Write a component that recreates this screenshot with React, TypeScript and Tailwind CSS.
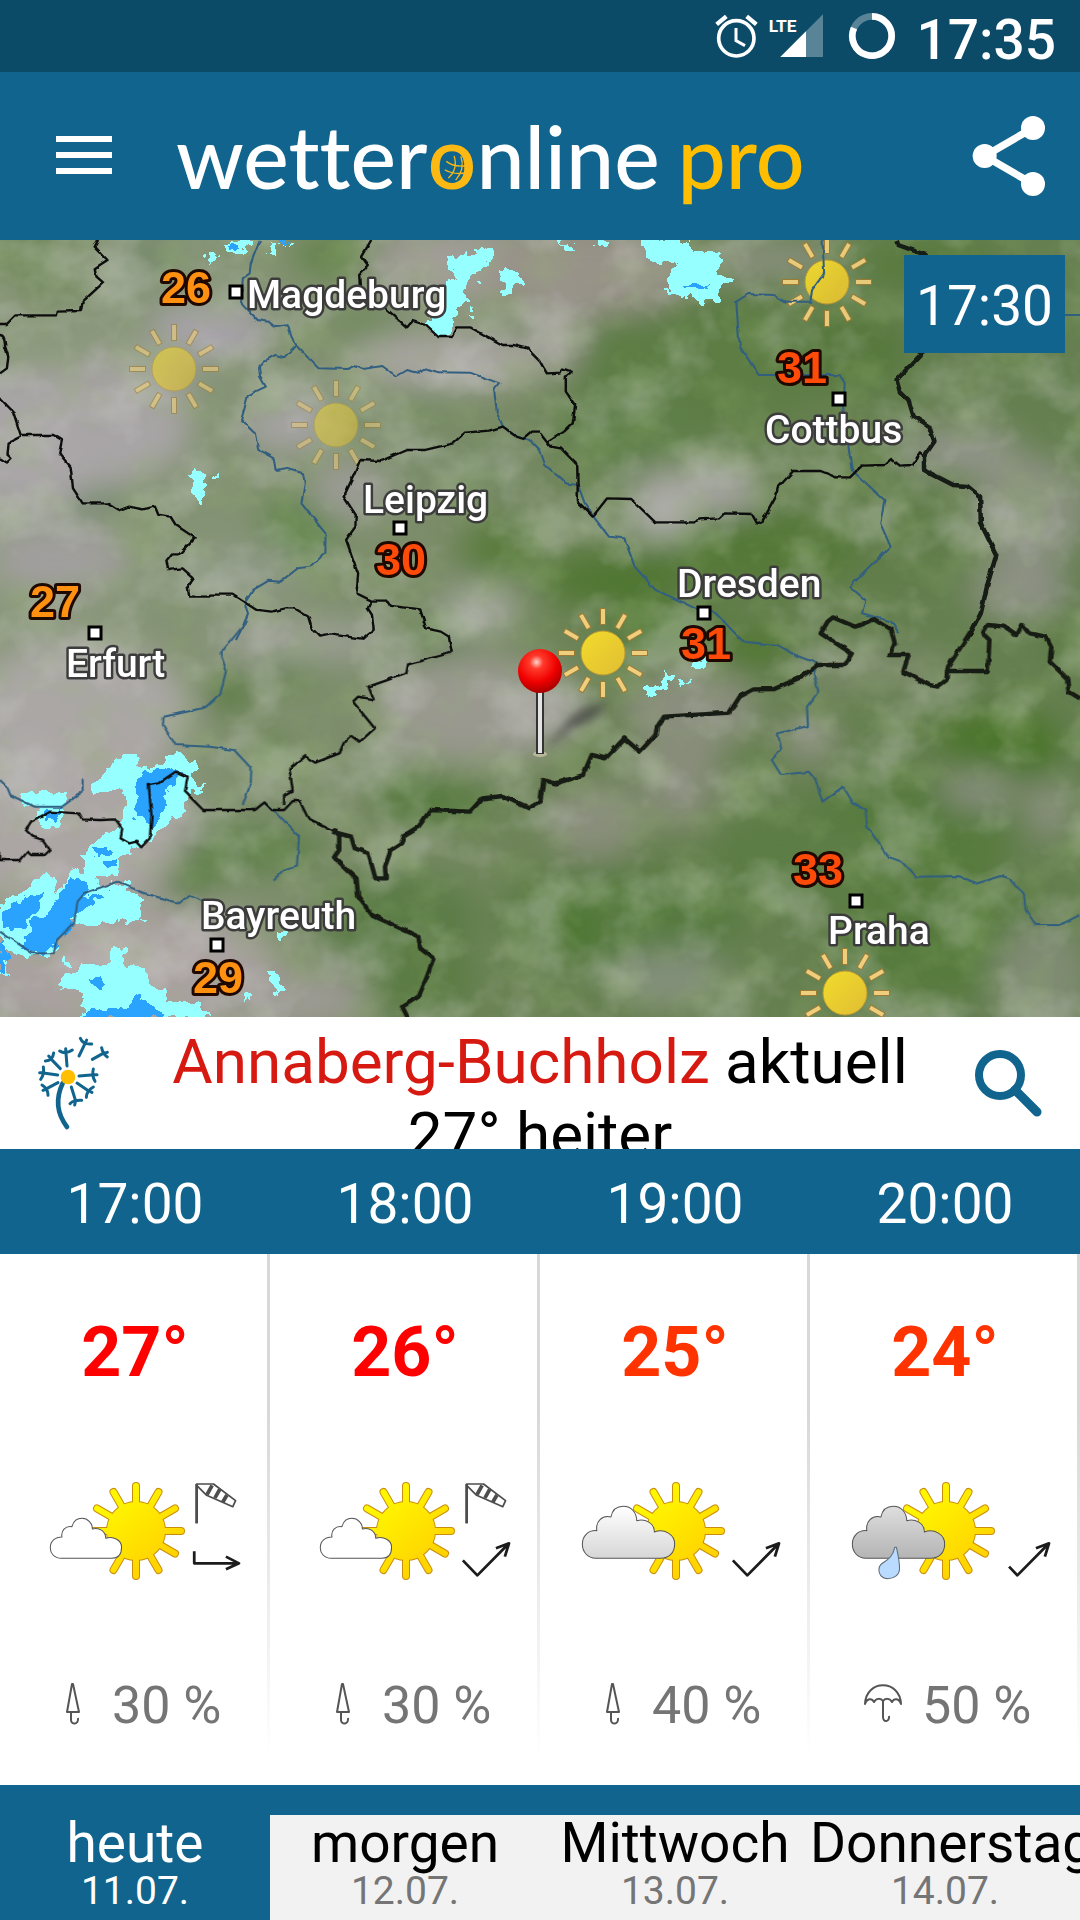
interface Hour {
  time: string;
  temp: string;
  tempClass: string;
  sky: "light" | "cloudy" | "rain";
  windsock: boolean;
  wind: "east" | "northeast" | "northeast-weak";
  rain: string;
  umbrellaOpen: boolean;
}

const HOURS: Hour[] = [
  { time: "17:00", temp: "27°", tempClass: "text-[#ff0000]", sky: "light", windsock: true, wind: "east", rain: "30 %", umbrellaOpen: false },
  { time: "18:00", temp: "26°", tempClass: "text-[#ff0000]", sky: "light", windsock: true, wind: "northeast", rain: "30 %", umbrellaOpen: false },
  { time: "19:00", temp: "25°", tempClass: "text-[#ff3300]", sky: "cloudy", windsock: false, wind: "northeast", rain: "40 %", umbrellaOpen: false },
  { time: "20:00", temp: "24°", tempClass: "text-[#ff3300]", sky: "rain", windsock: false, wind: "northeast-weak", rain: "50 %", umbrellaOpen: true },
];

const DAYS = [
  { name: "heute", date: "11.07.", active: true },
  { name: "morgen", date: "12.07.", active: false },
  { name: "Mittwoch", date: "13.07.", active: false },
  { name: "Donnerstag", date: "14.07.", active: false },
];

const CITIES = [
  { name: "Magdeburg", x: 247, y: 68, px: 236, py: 52 },
  { name: "Leipzig", x: 363, y: 273, px: 400, py: 288 },
  { name: "Cottbus", x: 765, y: 203, px: 839, py: 159 },
  { name: "Dresden", x: 677, y: 357, px: 704, py: 373 },
  { name: "Erfurt", x: 66, y: 437, px: 95, py: 393 },
  { name: "Bayreuth", x: 201, y: 689, px: 217, py: 705 },
  { name: "Praha", x: 828, y: 704, px: 856, py: 661 },
];

const READINGS = [
  { value: 26, x: 161, y: 63, color: "#ff9010" },
  { value: 27, x: 30, y: 377, color: "#ff9010" },
  { value: 29, x: 193, y: 753, color: "#ff9010" },
  { value: 30, x: 376, y: 335, color: "#ff4a08" },
  { value: 31, x: 777, y: 143, color: "#ff4a08" },
  { value: 31, x: 681, y: 419, color: "#ff4a08" },
  { value: 33, x: 793, y: 645, color: "#ff4a08" },
];

const MAP_SUNS = [
  { x: 174, y: 129, opacity: 0.6 },
  { x: 336, y: 185, opacity: 0.5 },
  { x: 827, y: 42, opacity: 0.95 },
  { x: 603, y: 413, opacity: 1 },
  { x: 845, y: 753, opacity: 1 },
];

// cx, cy, rx, ry, colour
const CLOUDS: [number, number, number, number, string][] = [
  [60, 190, 130, 60, "#a9a5a7"],
  [130, 150, 60, 40, "#a6a3a2"],
  [210, 90, 60, 28, "#a8a3ab"],
  [30, 230, 60, 40, "#aaa6a8"],
  [450, 120, 110, 28, "#a9a5a2"],
  [470, 25, 100, 40, "#a19d98"],
  [590, 30, 110, 45, "#989389"],
  [290, 185, 50, 28, "#a5a3a3"],
  [60, 320, 70, 35, "#a19f9e"],
  [250, 330, 60, 25, "#8f9a86"],
  [350, 250, 40, 30, "#9c9c96"],
  [480, 370, 40, 22, "#aaaaa6"],
  [480, 470, 110, 55, "#99998f"],
  [300, 400, 90, 22, "#9b9f94"],
  [80, 470, 110, 70, "#aaa7a5"],
  [60, 580, 130, 90, "#aba5a4"],
  [120, 730, 160, 70, "#a9a1a0"],
  [290, 760, 80, 30, "#9d9a94"],
  [30, 540, 40, 40, "#b0adac"],
  [700, 250, 70, 22, "#aaa8a6"],
  [660, 280, 35, 18, "#b4b2b0"],
  [740, 20, 40, 20, "#8c8f82"],
  [560, 90, 26, 40, "#9a978f"],
  [960, 210, 60, 24, "#92958a"],
  [1030, 270, 60, 55, "#8a9180"],
  [1020, 350, 50, 30, "#8d9184"],
  [690, 470, 70, 40, "#8b8f7f"],
  [680, 530, 40, 60, "#888d7a"],
  [595, 580, 50, 40, "#898e7c"],
  [810, 500, 28, 22, "#93938a"],
  [980, 550, 40, 18, "#8a9080"],
  [1050, 570, 22, 30, "#8c9181"],
  [870, 430, 90, 20, "#7d8a6d"],
  [670, 740, 60, 30, "#83907a"],
  [1040, 740, 50, 60, "#7f8b72"],
  [780, 20, 60, 18, "#8b9080"],
];

const FORESTS: [number, number, number, number, string][] = [
  [30, 15, 40, 26, "#64804c"],
  [330, 15, 40, 22, "#63824c"],
  [370, 100, 36, 26, "#66864f"],
  [150, 15, 22, 26, "#75896a"],
  [300, 290, 40, 34, "#64864d"],
  [430, 160, 44, 20, "#738a62"],
  [500, 310, 40, 30, "#5a7c3e"],
  [470, 230, 60, 20, "#758a66"],
  [700, 120, 130, 70, "#5d7d45"],
  [630, 190, 70, 40, "#5f7f48"],
  [850, 110, 60, 40, "#57783e"],
  [930, 25, 70, 26, "#587a3d"],
  [760, 310, 110, 40, "#557839"],
  [610, 340, 70, 26, "#507631"],
  [900, 300, 50, 60, "#607d4a"],
  [1060, 360, 30, 60, "#5d7c45"],
  [1000, 500, 62, 30, "#4b7429"],
  [1010, 528, 48, 18, "#4b7429"],
  [900, 600, 110, 60, "#567a3d"],
  [800, 620, 90, 50, "#5b7d45"],
  [620, 680, 120, 50, "#577a40"],
  [575, 690, 18, 16, "#4a7426"],
  [950, 700, 120, 60, "#567a3d"],
  [430, 560, 60, 26, "#587b3f"],
  [240, 610, 90, 24, "#5e7f48"],
  [190, 645, 20, 20, "#557a3a"],
  [400, 680, 80, 50, "#5c7c47"],
  [420, 740, 60, 40, "#5b7c45"],
  [290, 430, 30, 16, "#5d7f47"],
  [230, 455, 26, 18, "#58783f"],
  [150, 460, 24, 12, "#5f7e4a"],
  [270, 510, 14, 14, "#557a3a"],
  [440, 400, 36, 16, "#5e7f48"],
  [670, 390, 60, 26, "#55793b"],
  [760, 410, 40, 18, "#4f762e"],
  [80, 260, 50, 16, "#73886a"],
  [50, 40, 40, 20, "#6f8759"],
];

// The map is digitised in four tiles; each one has its own coordinate grid.
const TILES = [
  {
    id: "nw",
    transform: "scale(0.3444 0.3333)",
    rain: "M1310 45L1370 40L1410 15L1437 18V50L1395 90L1360 115L1355 180L1330 200L1310 285H1270L1235 250V235L1285 215L1290 130L1325 120L1310 80ZM1447 90L1510 95L1517 125L1490 135V165H1465ZM560 690H585L595 750L585 798H575L555 745ZM625 706h10v10h-10zM655 15L700 0H730V20L690 40L655 38ZM600 42H627V70H600ZM785 15H850V8L800 20V48H785ZM1362 205h14v22h-14zM1385 122h8v10h-8z",
    heavy: "M665 15h25v15h-25zM805 0h25v12h-25z",
    rivers: "M755 0L728 70L725 100L705 115L700 190L745 240L780 245L800 262L835 255L855 312L925 385L1010 387L1030 378L1055 387L1110 378L1150 408L1180 390L1215 398L1240 385L1270 397L1365 398L1450 430L1435 450L1443 520L1460 558L1500 590L1540 600L1568 630M860 315L825 352L800 345L765 365L752 380L755 410L772 440L720 465L710 505L700 540L740 580L750 630L795 655L800 690L830 685L880 700L885 730L875 790L945 880L945 935L900 980L865 985L815 1025L780 1022L735 1050L710 1090L720 1120L705 1160L685 1200",
    borders: "M285 0L275 20L312 60L275 85L280 110L300 128L240 185L235 213L165 215L162 226H45L20 252H0M0 285Q15 285 15 320L24 350L20 385L0 400M0 475L38 515L60 585H155L180 600L172 640L205 680L212 745L240 790H310L345 812L375 800L415 808L450 800L460 825L495 830L510 855L565 893L520 943H500L483 965L490 990L530 985L563 1015L545 1040L550 1070H610V1064H675L745 1110L790 1115L830 1105L855 1105L895 1130L905 1165L930 1190L960 1183L1055 1197L1085 1170L1080 1125L1068 1105L1078 1082M60 590L25 608L22 645L33 655L20 668L0 655M1078 0L1050 50L1068 75L1043 105L1045 140M1120 205L1182 262L1198 243L1235 255L1270 288H1312L1325 262H1365L1460 315H1490L1530 325L1568 365M1568 575H1545L1520 597L1500 590L1460 560L1420 572L1350 578L1315 610L1235 630H1180L1105 663L1045 660L1030 700L998 770L1033 825L1032 860L1005 900L1040 1000L1035 1060L1078 1082H1125L1135 1098L1220 1108L1237 1165L1280 1175L1303 1190L1312 1238",
    frontier: "",
  },
  {
    id: "ne",
    transform: "translate(540 0) scale(0.3444 0.3333)",
    rain: "M300 0H440L445 40L522 38V100L555 122L522 150V180L480 180L460 195L440 175L370 155L372 100L400 75L320 70ZM40 0H60V10L100 15V40H62L70 20ZM165 0H192V14H165Z",
    heavy: "M420 130H470L497 145H430Z",
    rivers: "M0 630L15 675L75 730L110 735L130 790L155 830L200 890L245 895L275 980L335 1050L400 1080L450 1105L510 1120L590 1205M820 0L825 100L790 150L785 185L710 185L680 165L605 162L570 185L575 260L580 320L635 405L870 405L885 430L880 500L905 690L1000 780L988 850L1018 920L900 1040L945 1080L935 1120L1020 1145L1040 1180M1524 225H1568",
    borders: "M0 365L20 400L60 398L65 385L92 395L75 410V455L102 495L95 550L70 575L20 608M0 580L30 620L60 625L108 675L110 785L153 830L195 775L265 777L335 847H450L460 838L520 835L535 820L615 822L630 850L645 845L685 770L690 745L735 693H815L860 712H900L935 677L1000 675L1020 657L1045 677L1080 675L1103 640L1115 650",
    frontier: "M1035 0L1040 15L1120 45L1150 200L1105 345L1035 420L1045 455L1070 480L1085 530L1130 560L1145 605L1115 650L1115 690L1200 735L1240 738L1278 770L1280 850L1325 945L1300 1030L1280 1120L1240 1200",
  },
  {
    id: "sw",
    transform: "translate(0 380) scale(0.3444 0.3333)",
    rain: "M262 500L320 440L345 410L400 405L403 440L470 430L510 395L550 415L582 437L560 465L570 495L600 500L570 520L545 520L540 580L500 600L460 638L385 690L345 720L345 765L270 770L300 800L370 790L410 840L410 890H435V898L410 895L370 915L340 900L255 925L215 905L165 970L150 1000L100 1010L60 1010L20 980L20 1060L0 1070V850L50 820L90 800L130 765L155 765L155 815L185 800L215 740L245 760L240 705L270 670L340 630L345 590L370 540L355 510L275 520ZM60 515L195 520L185 560L180 620L130 628L110 610L115 570L70 550ZM165 1100L205 1060L240 1040L320 1040L320 985L370 985L365 1040L420 1045L440 1100L485 1110L480 1145L580 1150L610 1195H230L250 1130L220 1105ZM785 1055L810 1060L825 1110L815 1122L785 1100ZM705 1120H735V1140H705ZM808 930H835V955H808ZM185 1020h14v12h-14z",
    heavy: "M395 470L430 450L500 435L530 460L480 520L470 600L440 620L395 590ZM205 770L260 780L240 830L310 820L260 860L215 880L215 920L165 970L120 1005L70 985L90 910L150 870ZM10 880L80 830L120 820L120 860L60 930L20 930ZM0 960L25 1000L15 1060H0ZM275 685h35v25h-35zM310 720h25v25h-25zM130 570H175L160 605L130 590ZM240 1175L360 1160L400 1130L470 1180L475 1195H235ZM265 1070h35v28h-35z",
    rivers: "M720 0L640 100L657 150L640 220L595 263L475 290L473 315L510 375L610 380L680 390L730 445L728 490L705 555M768 550L805 580L868 650L862 740L820 752L795 782M0 480L20 500L30 525L100 560H180L240 515V478M0 935L95 1000L155 1000L165 960L215 910L225 845L245 820L340 785L420 820L520 850L550 825L590 845",
    borders: "M0 695V720H60L80 695L90 705L130 705L145 690L125 660L95 650L75 630L90 605L145 575L230 580L240 598L290 600L335 598L355 625L350 655L375 670L395 665L410 682L435 655L440 590L432 495L460 490L510 455L545 470L537 515L590 570H740L768 547L790 570H825L850 543L870 543L895 595L960 628L980 630M825 555V525L850 510L840 445L885 408L915 428L985 400L1000 365L1020 345L1045 365L1088 325L1025 245L1040 230L1085 238L1070 200L1180 160L1185 133L1310 98",
    frontier: "M965 625L985 650V690L970 712L1035 775L1040 830L1080 885L1215 950L1220 985L1258 1015L1240 1070L1215 1130L1168 1160L1185 1195M965 635L1020 650L1030 685L1070 700L1090 775H1120L1118 740L1135 690L1165 670L1175 645L1215 620L1250 570L1365 575L1400 535L1460 528L1535 565L1568 545",
  },
  {
    id: "se",
    transform: "translate(540 380) scale(0.3444 0.3333)",
    rain: "M297 200L345 198L370 160L388 170L360 215L318 230L298 222ZM400 180H430L415 198ZM430 145L485 100L500 85V115L455 150Z",
    heavy: "",
    rivers: "M590 65L690 75L740 105L805 130L795 160L808 215L775 260L778 318L690 340L700 385L673 420L700 465L780 455L800 480L820 545L880 500L910 550L945 570L950 620L1010 710L1050 725L1090 770L1215 768L1270 790L1340 768L1365 775L1405 825L1410 870L1440 915H1510L1568 885",
    borders: "",
    frontier: "M1250 35L1185 140L1182 153H1300L1305 60L1285 40L1300 15L1350 20L1385 45L1400 15L1420 40L1470 50L1485 80L1480 125L1530 175L1535 215L1568 235M1182 153L1180 180L1155 200L1130 195L1055 155L1070 105L1015 105L1030 70L1020 30L970 -2L915 20L850 -8L835 5L815 40L905 100L885 135H805L760 170L680 207L620 208L580 230L550 278L360 290L340 320L335 345L290 395L245 355L190 415L150 405L125 465L45 490L10 480L0 550",
  },
];

const RAYS = [0, 30, 60, 90, 120, 150, 180, 210, 240, 270, 300, 330];

function StatusBar() {
  return (
    <div className="flex h-[72px] items-center justify-end bg-[#0b4b68] pr-6 text-white">
      <svg viewBox="111 0 138 216" className="mr-2 h-[72px] w-[46px]" fill="none" stroke="#fff">
        <circle cx="178" cy="115" r="53" strokeWidth="11" />
        <path d="M177 84V122L204 137" strokeWidth="9" />
        <path d="M119 73L148 49M238 73L209 49" strokeWidth="13" />
      </svg>
      <svg viewBox="270 0 168 216" className="mr-6 h-[72px] w-14">
        <path d="M307 171L435 43V171Z" fill="#fff" opacity="0.32" />
        <path d="M307 171L384 94V171Z" fill="#fff" />
        <text x="272" y="96" fill="#fff" fontSize="52" fontWeight="700" fontFamily="'Liberation Sans Narrow', Roboto, sans-serif">
          LTE
        </text>
      </svg>
      <svg viewBox="507 0 144 216" className="mr-5 h-[72px] w-12" fill="none" strokeWidth="20">
        <circle cx="579" cy="108" r="59" stroke="#fff" opacity="0.32" />
        <path d="M579 49A59 59 0 1 1 525 84" stroke="#fff" />
      </svg>
      <span className="pt-2 text-[55px] leading-[60px] font-medium">17:35</span>
    </div>
  );
}

function Header() {
  return (
    <header className="flex h-[168px] items-center bg-[#10648d] pr-[34px] pl-14">
      <button type="button" aria-label="Menü" className="mr-16 mb-[2px] flex w-14 flex-col gap-[10px]">
        <span className="h-[6px] bg-white" />
        <span className="h-[6px] bg-white" />
        <span className="h-[6px] bg-white" />
      </button>
      <h1 className="flex-1 font-[Lato] text-[86px] leading-[96px] font-medium whitespace-nowrap text-white [font-variant-ligatures:none]">
        wetter
        <span className="relative inline-block text-[#fdb913]">
          o
          <svg viewBox="830 145 86 90" className="absolute bottom-[22px] left-[14px] h-[29px] w-[28px]" fill="none" stroke="#fdb913" strokeWidth="4">
            <path d="M843 171Q870 192 914 183M838 197Q868 215 912 205M867 154Q880 195 849 223M888 155Q902 195 872 229" />
          </svg>
        </span>
        nline <span className="-ml-1 text-[#ffbe00]">pro</span>
      </h1>
      <button type="button" aria-label="Teilen">
        <svg viewBox="873 345 222 246" className="h-[82px] w-[74px]" fill="#fff" stroke="#fff">
          <path d="M1056 384L911 468L1056 552" fill="none" strokeWidth="22" />
          <circle cx="1056" cy="384" r="36" stroke="none" />
          <circle cx="911" cy="468" r="36" stroke="none" />
          <circle cx="1056" cy="552" r="36" stroke="none" />
        </svg>
      </button>
    </header>
  );
}

function WeatherMap() {
  return (
    <section className="relative">
      <svg viewBox="0 0 1080 777" className="block h-auto w-full" role="img" aria-label="Wetterkarte">
        <defs>
          <filter id="soft" x="-50%" y="-50%" width="200%" height="200%">
            <feGaussianBlur stdDeviation="16" />
          </filter>
          <filter id="grain" x="0" y="0" width="100%" height="100%">
            <feTurbulence type="fractalNoise" baseFrequency="0.014 0.016" numOctaves="4" seed="8" />
            <feColorMatrix values="0 0 0 0 0.72  0 0 0 0 0.72  0 0 0 0 0.71  3 0 0 0 -1.4" />
          </filter>
          <filter id="shade" x="0" y="0" width="100%" height="100%">
            <feTurbulence type="fractalNoise" baseFrequency="0.018 0.022" numOctaves="4" seed="21" />
            <feColorMatrix values="0 0 0 0 0.3  0 0 0 0 0.45  0 0 0 0 0.17  3 0 0 0 -1.4" />
          </filter>
          <filter id="rough" x="-5%" y="-5%" width="110%" height="110%">
            <feTurbulence type="fractalNoise" baseFrequency="0.12" numOctaves="1" seed="3" />
            <feDisplacementMap in="SourceGraphic" scale="4" xChannelSelector="R" yChannelSelector="G" />
          </filter>
          <filter id="ragged" x="-5%" y="-5%" width="110%" height="110%">
            <feTurbulence type="fractalNoise" baseFrequency="0.035" numOctaves="2" seed="5" />
            <feDisplacementMap in="SourceGraphic" scale="45" xChannelSelector="R" yChannelSelector="G" />
          </filter>
          <filter id="pinShadow" x="-50%" y="-50%" width="200%" height="200%">
            <feGaussianBlur stdDeviation="4" />
          </filter>
          <linearGradient id="ground" x1="0" y1="0" x2="1" y2="0.15">
            <stop offset="0" stopColor="#8e9a80" />
            <stop offset="0.45" stopColor="#7b8c69" />
            <stop offset="0.65" stopColor="#66804f" />
            <stop offset="1" stopColor="#657f50" />
          </linearGradient>
          <linearGradient id="mapSun" x1="0" y1="0" x2="1" y2="1">
            <stop offset="0" stopColor="#f2dc2c" />
            <stop offset="1" stopColor="#e0bd33" />
          </linearGradient>
          <radialGradient id="pinHead" cx="0.42" cy="0.3" r="0.7">
            <stop offset="0" stopColor="#ffd5cf" />
            <stop offset="0.22" stopColor="#ff3a2a" />
            <stop offset="0.65" stopColor="#f00000" />
            <stop offset="1" stopColor="#a80000" />
          </radialGradient>
        </defs>

        <rect width="1080" height="777" fill="url(#ground)" />
        <g filter="url(#soft)">
          {FORESTS.map(([cx, cy, rx, ry, fill]) => (
            <ellipse key={`${cx}-${cy}`} cx={cx} cy={cy} rx={rx} ry={ry} fill={fill} />
          ))}
          {CLOUDS.map(([cx, cy, rx, ry, fill]) => (
            <ellipse key={`${cx}-${cy}`} cx={cx} cy={cy} rx={rx} ry={ry} fill={fill} />
          ))}
        </g>
        <rect width="1080" height="777" filter="url(#grain)" opacity="0.3" />
        <rect width="1080" height="777" filter="url(#shade)" opacity="0.25" />

        {MAP_SUNS.map((s) => (
          <g key={`${s.x}-${s.y}`} transform={`translate(${s.x} ${s.y})`} opacity={s.opacity}>
            {RAYS.map((a) => (
              <g key={a} transform={`rotate(${a})`}>
                <path d="M0 -28V-45" stroke="#9c7b34" strokeWidth="6" />
                <path d="M0 -29V-44" stroke="#efcf7d" strokeWidth="4" />
              </g>
            ))}
            <circle r="22" fill="url(#mapSun)" stroke="#c09a30" strokeWidth="1" />
          </g>
        ))}

        {TILES.map((t) => (
          <g key={t.id} transform={t.transform} shapeRendering="crispEdges">
            <path d={t.rain} fill="#96ffff" filter="url(#ragged)" />
            <path d={t.heavy} fill="#2ba3ff" filter="url(#ragged)" />
          </g>
        ))}
        <g filter="url(#rough)">
          {TILES.map((t) => (
            <g key={t.id} transform={t.transform} fill="none" strokeLinejoin="round">
              <path d={t.rivers} stroke="#315f80" strokeWidth="6" />
              <path d={t.borders} stroke="#0c0c0c" strokeWidth="7" />
              <path d={t.frontier} stroke="#161a12" strokeWidth="13" />
            </g>
          ))}
        </g>

        <path d="M543 512L568 480Q585 462 606 464Q600 482 572 488Z" fill="#333" opacity="0.6" filter="url(#pinShadow)" />
        <ellipse cx="540" cy="514" rx="7" ry="3" fill="#b9b79c" />
        <rect x="536" y="450" width="8" height="64" fill="#333" />
        <rect x="538" y="450" width="4" height="63" fill="#e4e4e4" />
        <circle cx="540" cy="431" r="22" fill="url(#pinHead)" />

        {CITIES.map((c) => (
          <g key={c.name}>
            <rect x={c.px - 6} y={c.py - 6} width="12" height="12" fill="#fff" stroke="#000" strokeWidth="3" />
            <text
              x={c.x}
              y={c.y}
              fill="#fff"
              stroke="#3c3c3c"
              strokeWidth="5"
              strokeLinejoin="round"
              paintOrder="stroke"
              fontFamily="Roboto, sans-serif"
              fontWeight="500"
              fontSize="39"
            >
              {c.name}
            </text>
          </g>
        ))}
        {READINGS.map((r) => (
          <text
            key={`${r.x}-${r.y}`}
            x={r.x}
            y={r.y}
            fill={r.color}
            stroke="#1e0800"
            strokeWidth="6"
            strokeLinejoin="round"
            paintOrder="stroke"
            fontFamily="'Liberation Sans', sans-serif"
            fontWeight="700"
            fontSize="45"
          >
            {r.value}
          </text>
        ))}
      </svg>
      <div className="absolute top-[15px] right-[15px] bg-[#10648d] px-3 pt-[19px] pb-[15px] text-[55px] leading-[64px] text-white">17:30</div>
    </section>
  );
}

function Dandelion() {
  return (
    <svg viewBox="0 0 360 360" className="h-[120px] w-[120px]" fill="none" stroke="#10648d" strokeWidth="9" strokeLinecap="round">
      <path d="M128 190Q95 260 141 321" strokeWidth="14" />
      <path d="M141 138L137 86M119 93Q137 104 157 90" />
      <path d="M121 146L92 116M76 123Q98 122 101 99M86 108L95 118" />
      <path d="M113 165L70 159M70 141Q74 162 62 178M59 158H72" />
      <path d="M114 188L80 206M66 195Q84 206 84 226M69 211L82 206" />
      <path d="M154 201L166 240M150 251Q160 240 185 241M164 255L167 242" />
      <path d="M171 189L206 213M199 232Q200 212 220 201M216 217L205 212" />
      <path d="M177 168L222 164M220 147Q215 167 225 184M231 164H218" />
      <path d="M177 108L195 71M181 55Q188 74 215 72M200 60L195 71" />
      <path d="M217 118L248 101M245 83Q248 101 262 111M262 97L248 101" />
      <circle cx="144" cy="171" r="22" fill="#ffbe00" stroke="none" />
    </svg>
  );
}

function CurrentBar() {
  return (
    <section className="flex h-[132px] items-start justify-between overflow-hidden bg-white px-5">
      <a href="#aktuell" aria-label="Aktuelles Wetter" className="mt-[3px] shrink-0">
        <Dandelion />
      </a>
      <p className="flex-1 pt-2 text-center text-[62px] leading-[73px] text-black">
        <span className="text-[#d71a11]">Annaberg-Buchholz</span> aktuell
        <br />
        27° heiter
      </p>
      <button type="button" aria-label="Ort suchen" className="mt-[22px] flex w-[120px] shrink-0 justify-center">
        <svg viewBox="0 0 88 88" className="h-[88px] w-[88px]" fill="none" stroke="#10648d">
          <circle cx="44" cy="36" r="21" strokeWidth="8" />
          <path d="M59 51L81 73" strokeWidth="9" strokeLinecap="round" />
        </svg>
      </button>
    </section>
  );
}

function SkyIcon({ hour }: { hour: Hour }) {
  const shaft = {
    east: "M564 274V310H692M656 290L694 310L656 328",
    northeast: "M560 301L602 346L692 252M656 265L694 250L682 290",
    "northeast-weak": "M578 320L602 346L692 252M656 265L694 250L682 290",
  }[hour.wind];

  return (
    <svg viewBox="0 0 270 134" className="block h-auto w-full" role="img" aria-label="Wettersymbol">
      <defs>
        <linearGradient id="sunFill" gradientUnits="userSpaceOnUse" x1="105" y1="35" x2="165" y2="110">
          <stop offset="0.1" stopColor="#fff600" />
          <stop offset="0.9" stopColor="#ffd300" />
        </linearGradient>
        <linearGradient id="cloudFill" x1="0" y1="0" x2="0" y2="1">
          <stop offset="0" stopColor="#fff" />
          <stop offset="1" stopColor="#d6d6d6" />
        </linearGradient>
        <linearGradient id="rainCloudFill" x1="0" y1="0" x2="0" y2="1">
          <stop offset="0" stopColor="#dedede" />
          <stop offset="1" stopColor="#b4b4b4" />
        </linearGradient>
      </defs>
      <g stroke="#c98d0c" strokeLinecap="round" strokeWidth="8">
        {RAYS.map((a) => (
          <path key={a} d="M136 50V26" transform={`rotate(${a} 136 71)`} />
        ))}
        <circle cx="136" cy="71" r="26" fill="#c98d0c" />
      </g>
      <g stroke="url(#sunFill)" strokeLinecap="round" strokeWidth="6">
        {RAYS.map((a) => {
          const rad = (a * Math.PI) / 180;
          return (
            <line
              key={a}
              x1={136}
              y1={71}
              x2={136 + 45 * Math.sin(rad)}
              y2={71 - 45 * Math.cos(rad)}
            />
          );
        })}
        <circle cx="136" cy="71" r="26" fill="url(#sunFill)" />
      </g>
      <g transform="scale(0.3444 0.3333)" strokeLinejoin="round">
        {hour.sky === "light" && (
          <path
            d="M178 295C157 294 146 280 146 263C146 244 160 231 180 231C176 212 190 197 209 200C213 184 223 175 238 175C255 175 269 190 268 207C290 201 307 215 307 235C330 228 353 240 353 262C353 280 345 295 325 295Z"
            fill="#fff"
            stroke="#555"
            strokeWidth="3"
          />
        )}
        {hour.sky !== "light" && (
          <path
            d="M162 295C138 295 123 275 123 252C123 228 140 210 165 212C161 184 180 165 206 171C210 150 222 139 242 139C266 139 280 158 281 182C306 176 332 188 332 216C362 205 391 224 391 252C391 278 375 295 350 295Z"
            fill={hour.sky === "rain" ? "url(#rainCloudFill)" : "url(#cloudFill)"}
            stroke="#555"
            strokeWidth="3"
          />
        )}
        {hour.sky === "rain" && (
          <path
            d="M246 262H251C256 285 260 305 260 325C260 345 245 356 226 356C208 356 200 343 200 330C200 300 236 312 246 262Z"
            fill="#b8dbff"
            stroke="#5f6b78"
            strokeWidth="3"
          />
        )}
        {hour.windsock && (
          <g fill="none" stroke="#4d4d4d">
            <path d="M571 190V72H620L684 122L676 140L600 106L571 76" strokeWidth="5" />
            <path d="M571 190V72" strokeWidth="8" />
            <path d="M616 76L601 104M638 88L624 114M659 105L647 126" strokeWidth="11" />
          </g>
        )}
        <path d={shaft} fill="none" stroke="#1c1c1c" strokeWidth="8" />
      </g>
    </svg>
  );
}

function Umbrella({ open }: { open: boolean }) {
  return (
    <svg viewBox="0 0 48 48" className="h-12 w-12" fill="none" stroke="#555" strokeWidth="2" strokeLinejoin="round">
      {open ? (
        <path d="M7 23C8 -2 42 -2 43 23C41 17 36 17 34 21C32 17 27 17 25 20C23 17 18 17 16 21C14 17 9 17 7 23ZM25 19V36C25 42 32 41 31 35" />
      ) : (
        <path d="M24 3L19 31H31L25 3ZM23 31V39C23 44 31 44 30 37" />
      )}
    </svg>
  );
}

function HourColumn({ hour }: { hour: Hour }) {
  return (
    <li className="flex">
      <div className="-mr-[3px] min-w-0 flex-1">
        <p className={`pt-[62px] text-center text-[70px] leading-[72px] font-bold ${hour.tempClass}`}>{hour.temp}</p>
        <div className="mt-[72px]">
          <SkyIcon hour={hour} />
        </div>
        <div className="mt-[87px] flex items-center gap-4 pb-14 pl-12">
          <Umbrella open={hour.umbrellaOpen} />
          <span className="pt-[2px] text-[52px] leading-[46px] whitespace-nowrap text-[#757575]">{hour.rain}</span>
        </div>
      </div>
      <span className="w-[3px] bg-linear-to-b from-[#d8d8d8] from-30% to-white to-95%" />
    </li>
  );
}

export default function App() {
  return (
    <main className="min-h-screen overflow-x-hidden bg-white font-[Roboto,sans-serif]">
      <StatusBar />
      <Header />
      <WeatherMap />
      <CurrentBar />
      <ul className="grid grid-cols-4 bg-[#10648d]">
        {HOURS.map((h) => (
          <li key={h.time} className="pt-[23px] pb-[18px] text-center text-[55px] leading-[64px] text-white">
            {h.time}
          </li>
        ))}
      </ul>
      <ul className="grid grid-cols-4">
        {HOURS.map((h) => (
          <HourColumn key={h.time} hour={h} />
        ))}
      </ul>
      <nav className="bg-[#10648d] pt-[30px]">
        <div className="grid grid-cols-4">
          {DAYS.map((d) => (
            <button
              key={d.name}
              type="button"
              aria-pressed={d.active}
              className={`min-w-0 pb-2 text-center ${d.active ? "bg-[#10648d] text-white" : "bg-[#f2f2f2] text-black"}`}
            >
              <span className="block text-[55px] leading-[56px] whitespace-nowrap">{d.name}</span>
              <span className={`block text-[39px] leading-[41px] ${d.active ? "text-white" : "text-[#757575]"}`}>{d.date}</span>
            </button>
          ))}
        </div>
      </nav>
    </main>
  );
}
